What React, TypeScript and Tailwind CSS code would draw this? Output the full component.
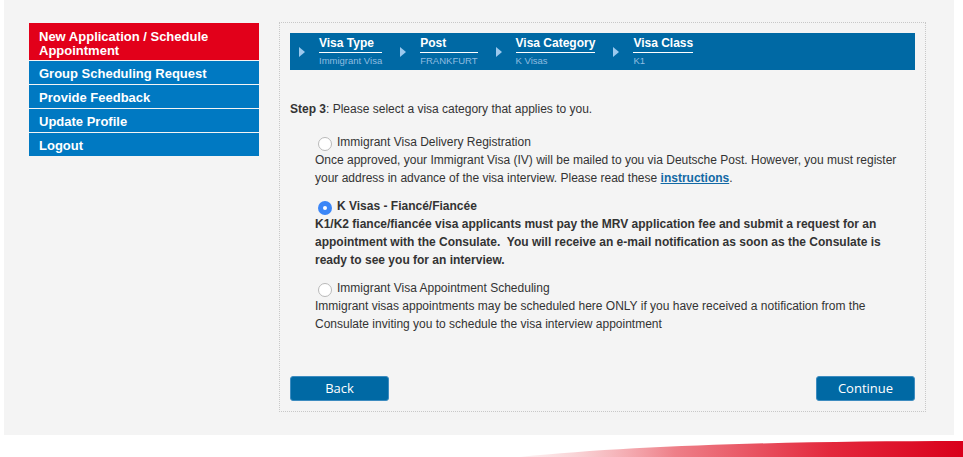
import React from 'react';

const sans = { fontFamily: '"Liberation Sans", Arial, sans-serif' };

const steps = [
  { title: 'Visa Type', value: 'Immigrant Visa' },
  { title: 'Post', value: 'FRANKFURT' },
  { title: 'Visa Category', value: 'K Visas' },
  { title: 'Visa Class', value: 'K1' },
];

const menu = ['Group Scheduling Request', 'Provide Feedback', 'Update Profile', 'Logout'];

const Radio = ({ checked }: { checked?: boolean }) =>
  checked ? (
    <span className="inline-flex w-[14px] h-[14px] rounded-full bg-[#3b86f7] items-center justify-center shrink-0 mt-[4px]">
      <span className="w-[4px] h-[4px] rounded-full bg-white" />
    </span>
  ) : (
    <span className="inline-block w-[14px] h-[14px] rounded-full bg-white border border-[#b9b9b9] shrink-0 mt-[4px]" />
  );

const App = () => {
  return (
    <div className="min-h-screen bg-white text-[#333]" style={sans}>
      {/* Gray page area */}
      <div className="ml-[4px] w-[950px] h-[435px] bg-[#f4f4f4] flex pl-[25px] pt-[22px]">
        {/* Sidebar */}
        <div className="w-[230px] mt-[1px] flex flex-col gap-[1px] mr-[20px]">
          <div className="bg-[#e2001a] text-white font-bold text-[13px] leading-[14px] pl-[10px] pt-[7px] h-[37px]">
            New Application / Schedule Appointment
          </div>
          {menu.map((m) => (
            <div key={m} className="bg-[#0079c2] text-white font-bold text-[13px] leading-[20px] pl-[10px] pt-[3px] h-[23px]">
              {m}
            </div>
          ))}
        </div>

        {/* Main panel */}
        <div className="w-[647px] h-[390px] border border-dotted border-[#c8c8c8] px-[10px] pt-[10px] pb-[10px] flex flex-col">
          {/* Breadcrumb */}
          <div className="bg-[#0069a4] h-[37px] flex items-start pl-[9px] pt-[3px]">
            {steps.map((s) => (
              <div key={s.title} className="flex items-start">
                <svg width="6" height="10" viewBox="0 0 6 10" className="mt-[11px] mr-[14px]">
                  <path d="M0 0 L6 5 L0 10 Z" fill="#9cc9ee" />
                </svg>
                <div className="flex flex-col mr-[18px]">
                  <span className="text-white font-bold text-[12px] leading-[15px] border-b border-white pb-[1px]">
                    {s.title}
                  </span>
                  <span className="text-[#8fbde0] text-[9.5px] leading-[14px] mt-[1px]">{s.value}</span>
                </div>
              </div>
            ))}
          </div>

          <p className="text-[12px] leading-[18px] mt-[30px]">
            <b>Step 3</b>: Please select a visa category that applies to you.
          </p>

          <div className="pl-[25px] mt-[15px] text-[12px] leading-[18px]">
            <div className="flex gap-[5px] pl-[3px]">
              <Radio />
              <span>Immigrant Visa Delivery Registration</span>
            </div>
            <p>
              Once approved, your Immigrant Visa (IV) will be mailed to you via Deutsche Post. However, you must
              register your address in advance of the visa interview. Please read these{' '}
              <a className="font-bold underline text-[#1269a5]" href="#">
                instructions
              </a>
              .
            </p>

            <div className="flex gap-[5px] pl-[3px] mt-[10px] font-bold">
              <Radio checked />
              <span>K Visas - Fiancé/Fiancée</span>
            </div>
            <p className="font-bold">
              K1/K2 fiance/fiancée visa applicants must pay the MRV application fee and submit a request for an
              appointment with the Consulate.&nbsp; You will receive an e-mail notification as soon as the Consulate
              is ready to see you for an interview.
            </p>

            <div className="flex gap-[5px] pl-[3px] mt-[10px]">
              <Radio />
              <span>Immigrant Visa Appointment Scheduling</span>
            </div>
            <p>
              Immigrant visas appointments may be scheduled here ONLY if you have received a notification from the
              Consulate inviting you to schedule the visa interview appointment
            </p>
          </div>

          <div className="mt-auto flex justify-between">
            <button
              className="w-[99px] h-[25px] rounded-[3px] bg-[#0069a4] border border-[#3d8cc0] text-white text-[13px]"
              style={{ fontFamily: '"Open Sans", sans-serif' }}
            >
              Back
            </button>
            <button
              className="w-[99px] h-[25px] rounded-[3px] bg-[#0069a4] border border-[#3d8cc0] text-white text-[13px]"
              style={{ fontFamily: '"Open Sans", sans-serif' }}
            >
              Continue
            </button>
          </div>
        </div>
      </div>

      {/* Bottom swoosh */}
      <svg width="963" height="22" viewBox="0 0 963 22" className="block">
        <defs>
          <linearGradient id="sw" x1="520" y1="0" x2="963" y2="0" gradientUnits="userSpaceOnUse">
            <stop offset="0" stopColor="#f7b8bd" stopOpacity="0.2" />
            <stop offset="0.35" stopColor="#ee7f88" />
            <stop offset="0.7" stopColor="#e3283c" />
            <stop offset="1" stopColor="#d9001b" />
          </linearGradient>
        </defs>
        <path d="M520 22 C 640 10, 800 6, 963 6 L963 22 Z" fill="url(#sw)" />
      </svg>
    </div>
  );
};

export default App;
